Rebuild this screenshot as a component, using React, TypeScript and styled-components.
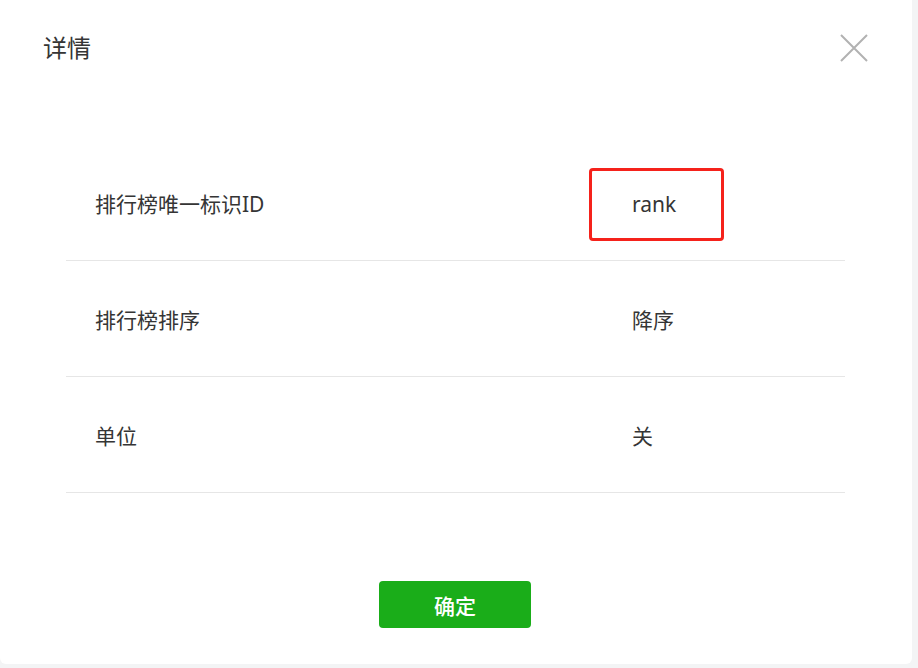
import styled, { createGlobalStyle } from "styled-components";

const GlobalStyle = createGlobalStyle`
  html, body {
    margin: 0;
    padding: 0;
    background: #f3f4f5;
    font-family: "Noto Sans", "Noto Sans CJK SC", sans-serif;
  }
`;

const Dialog = styled.div`
  width: 912px;
  height: 664px;
  background: #fff;
  border-radius: 0 0 6px 6px;
  display: flex;
  flex-direction: column;
  box-sizing: border-box;
`;

const Header = styled.div`
  display: flex;
  justify-content: space-between;
  align-items: center;
  padding: 32px 43px 32px 43px;
  height: 32px;
`;

const Title = styled.h3`
  margin: 0;
  font-size: 24px;
  line-height: 32px;
  font-weight: normal;
  color: #353535;
`;

const Close = styled.button`
  width: 30px;
  height: 30px;
  border: 0;
  padding: 0;
  background: none;
  display: flex;
  align-items: center;
  justify-content: center;
  cursor: pointer;
`;

const Table = styled.div`
  margin: 49px 67px 0 66px;
`;

const Row = styled.div`
  display: grid;
  grid-template-columns: 537px 1fr;
  align-items: center;
  height: 115px;
  padding-left: 29px;
  border-bottom: 1px solid #e6e6e6;
  font-size: 21px;
  color: #353535;
`;

const Value = styled.div<{ $marked?: boolean }>`
  justify-self: start;
  ${(p) =>
    p.$marked &&
    `
    margin: 3px 0 0 -43px;
    padding: 0 45px 0 40px;
    height: 67px;
    display: flex;
    align-items: center;
    border: 3px solid #f5221b;
    border-radius: 4px;
  `}
`;

const Footer = styled.div`
  display: flex;
  justify-content: center;
  margin-top: 88px;
  padding-right: 2px;
`;

const Confirm = styled.button`
  width: 152px;
  height: 47px;
  border: 0;
  border-radius: 4px;
  background: #1aad19;
  color: #fff;
  font-size: 21px;
  font-weight: 500;
  font-family: "Noto Sans CJK SC", sans-serif;
  cursor: pointer;
`;

const rows = [
  { label: "排行榜唯一标识ID", value: "rank", marked: true },
  { label: "排行榜排序", value: "降序" },
  { label: "单位", value: "关" },
];

const App = () => {
  return (
    <>
      <GlobalStyle />
      <Dialog>
        <Header>
          <Title>详情</Title>
          <Close aria-label="close">
            <svg width="28" height="28" viewBox="0 0 28 28">
              <path d="M1 1 L27 27 M27 1 L1 27" stroke="#b2b2b2" strokeWidth="2" />
            </svg>
          </Close>
        </Header>
        <Table>
          {rows.map((r) => (
            <Row key={r.label}>
              <div>{r.label}</div>
              <Value $marked={r.marked}>{r.value}</Value>
            </Row>
          ))}
        </Table>
        <Footer>
          <Confirm>确定</Confirm>
        </Footer>
      </Dialog>
    </>
  );
};

export default App;
